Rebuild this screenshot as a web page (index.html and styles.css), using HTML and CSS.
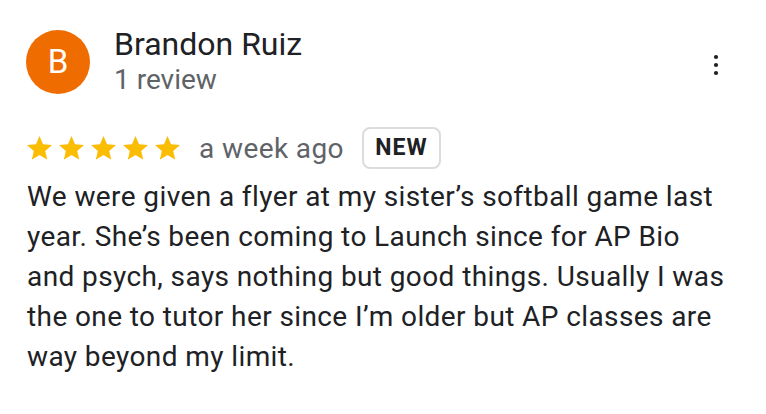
FILE: index.html
```html
<!DOCTYPE html>
<html>
<head>
<meta charset="utf-8">
<link rel="stylesheet" href="styles.css">
</head>
<body>
<div class="review">
  <div class="header">
    <div class="avatar">B</div>
    <div class="who">
      <div class="name">Brandon Ruiz</div>
      <div class="count">1 review</div>
    </div>
    <svg class="more" width="24" height="24" viewBox="0 0 24 24"><circle cx="12" cy="4" r="2.1" fill="#202124"/><circle cx="12" cy="12" r="2.1" fill="#202124"/><circle cx="12" cy="20" r="2.1" fill="#202124"/></svg>
  </div>
  <div class="meta">
    <div class="stars">
      <svg class="star" viewBox="2 2 20 19"><path d="M12 17.27L18.18 21l-1.64-7.03L22 9.24l-7.19-.61L12 2 9.19 8.63 2 9.24l5.46 4.73L5.82 21z"/></svg>
      <svg class="star" viewBox="2 2 20 19"><path d="M12 17.27L18.18 21l-1.64-7.03L22 9.24l-7.19-.61L12 2 9.19 8.63 2 9.24l5.46 4.73L5.82 21z"/></svg>
      <svg class="star" viewBox="2 2 20 19"><path d="M12 17.27L18.18 21l-1.64-7.03L22 9.24l-7.19-.61L12 2 9.19 8.63 2 9.24l5.46 4.73L5.82 21z"/></svg>
      <svg class="star" viewBox="2 2 20 19"><path d="M12 17.27L18.18 21l-1.64-7.03L22 9.24l-7.19-.61L12 2 9.19 8.63 2 9.24l5.46 4.73L5.82 21z"/></svg>
      <svg class="star" viewBox="2 2 20 19"><path d="M12 17.27L18.18 21l-1.64-7.03L22 9.24l-7.19-.61L12 2 9.19 8.63 2 9.24l5.46 4.73L5.82 21z"/></svg>
    </div>
    <span class="when">a week ago</span>
    <span class="badge">NEW</span>
  </div>
  <p class="text">We were given a flyer at my sister’s softball game last year. She’s been coming to Launch since for AP Bio and psych, says nothing but good things. Usually I was the one to tutor her since I’m older but AP classes are way beyond my limit.</p>
</div>
</body>
</html>
```
FILE: styles.css
```css
html, body {
  margin: 0;
  padding: 0;
  background: #ffffff;
}
body {
  font-family: Roboto, "Liberation Sans", sans-serif;
  color: #202124;
}
.review {
  width: 766px;
  height: 414px;
  box-sizing: border-box;
  padding: 25px 38px 0 27px;
}
.header {
  display: flex;
  align-items: flex-start;
}
.avatar {
  width: 64px;
  height: 64px;
  margin-top: 5px;
  margin-left: -1px;
  border-radius: 50%;
  background: #ef6c00;
  color: #ffffff;
  font-size: 33px;
  line-height: 64px;
  text-align: center;
  flex: none;
}
.who {
  margin-left: 24px;
  display: flex;
  flex-direction: column;
}
.name {
  font-size: 32px;
  line-height: 38px;
  color: #202124;
}
.count {
  font-size: 28px;
  line-height: 34px;
  color: #5f6368;
}
.more {
  margin-left: auto;
  margin-top: 28px;
  flex: none;
}
.meta {
  display: flex;
  align-items: center;
  margin-top: 30px;
  height: 42px;
}
.stars {
  display: flex;
  gap: 7px;
}
.star {
  width: 25px;
  height: 23.75px;
  fill: #fbbc04;
  display: block;
}
.when {
  margin-left: 19px;
  font-size: 28px;
  letter-spacing: 0.4px;
  color: #5f6368;
}
.badge {
  margin-left: 18px;
  box-sizing: border-box;
  width: 79px;
  height: 42px;
  border: 2px solid #dadce0;
  border-radius: 8px;
  font-size: 23px;
  font-weight: 700;
  letter-spacing: 1px;
  line-height: 38px;
  text-align: center;
  color: #202124;
}
.text {
  margin: 8px 0 0 0;
  font-size: 28px;
  line-height: 40px;
  letter-spacing: 0.4px;
  color: #202124;
}
```
